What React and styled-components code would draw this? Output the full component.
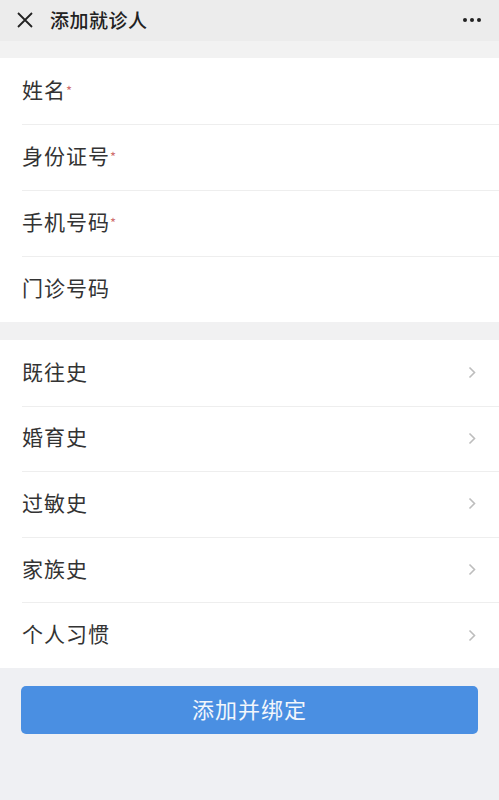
import React from 'react';
import styled, { createGlobalStyle } from 'styled-components';

const GlobalStyle = createGlobalStyle`
  html, body {
    margin: 0;
    padding: 0;
    background: #eff0f3;
    font-family: "Noto Sans CJK SC", "Noto Sans", sans-serif;
  }
`;

const Page = styled.div`
  width: 499px;
  min-height: 800px;
  background: #eff0f3;
`;

const TopBar = styled.header`
  height: 41px;
  background: #ececec;
  display: flex;
  align-items: center;
  padding: 0 17px 2px 16px;
  box-sizing: border-box;
`;

const Title = styled.h1`
  margin: 0 0 0 16px;
  flex: 1;
  font-size: 19px;
  font-weight: 500;
  color: #222;
  letter-spacing: 0.5px;
`;

const IconButton = styled.span`
  display: flex;
  align-items: center;
  justify-content: center;
  color: #222;
`;

const Gap = styled.div`
  height: ${p => p.$h}px;
  background: ${p => p.$bg || '#f1f1f2'};
`;

const Group = styled.section`
  background: #fff;
`;

const Row = styled.div`
  height: ${p => p.$h}px;
  display: flex;
  align-items: center;
  padding: 0 22px 4px;
  box-sizing: border-box;
  position: relative;

  & + &::before {
    content: '';
    position: absolute;
    top: 0;
    left: 22px;
    right: 0;
    height: 1px;
    background: #eeeeee;
  }
`;

const Label = styled.span`
  flex: 1;
  font-size: 21px;
  color: #333;
  letter-spacing: 1px;
`;

const Required = styled.span`
  color: #d07070;
  font-size: 13px;
  margin-left: 0;
  position: relative;
  top: -2px;
`;

const Chevron = styled.span`
  display: flex;
  color: #bdbdbd;
  margin-right: 0;
  padding-top: 4px;
`;

const Footer = styled.div`
  padding: 18px 21px 0;
`;

const SubmitButton = styled.button`
  width: 100%;
  height: 48px;
  border: none;
  border-radius: 5px;
  background: #4a8fe2;
  color: #f2f6fc;
  font-family: inherit;
  font-size: 22px;
  letter-spacing: 1px;
  padding-bottom: 4px;
`;

const basic = [
  { label: '姓名', required: true },
  { label: '身份证号', required: true },
  { label: '手机号码', required: true },
  { label: '门诊号码' },
];

const history = ['既往史', '婚育史', '过敏史', '家族史', '个人习惯'];

function ChevronIcon() {
  return (
    <svg width="9" height="13" viewBox="0 0 9 13" fill="none">
      <path d="M1.5 1.5 L6.5 6.5 L1.5 11.5" stroke="currentColor" strokeWidth="1.6" />
    </svg>
  );
}

export default function App() {
  return (
    <Page>
      <GlobalStyle />
      <TopBar>
        <IconButton>
          <svg width="18" height="18" viewBox="0 0 18 18">
            <path d="M2 2 L16 16 M16 2 L2 16" stroke="currentColor" strokeWidth="1.8" />
          </svg>
        </IconButton>
        <Title>添加就诊人</Title>
        <IconButton>
          <svg width="20" height="6" viewBox="0 0 20 6">
            <circle cx="3" cy="3" r="2" fill="currentColor" />
            <circle cx="10" cy="3" r="2" fill="currentColor" />
            <circle cx="17" cy="3" r="2" fill="currentColor" />
          </svg>
        </IconButton>
      </TopBar>
      <Gap $h={17} $bg="#f2f2f2" />
      <Group>
        {basic.map(item => (
          <Row key={item.label} $h={66}>
            <Label>
              {item.label}
              {item.required && <Required>*</Required>}
            </Label>
          </Row>
        ))}
      </Group>
      <Gap $h={18} />
      <Group>
        {history.map(label => (
          <Row key={label} $h={65.6}>
            <Label>{label}</Label>
            <Chevron><ChevronIcon /></Chevron>
          </Row>
        ))}
      </Group>
      <Footer>
        <SubmitButton>添加并绑定</SubmitButton>
      </Footer>
    </Page>
  );
}
